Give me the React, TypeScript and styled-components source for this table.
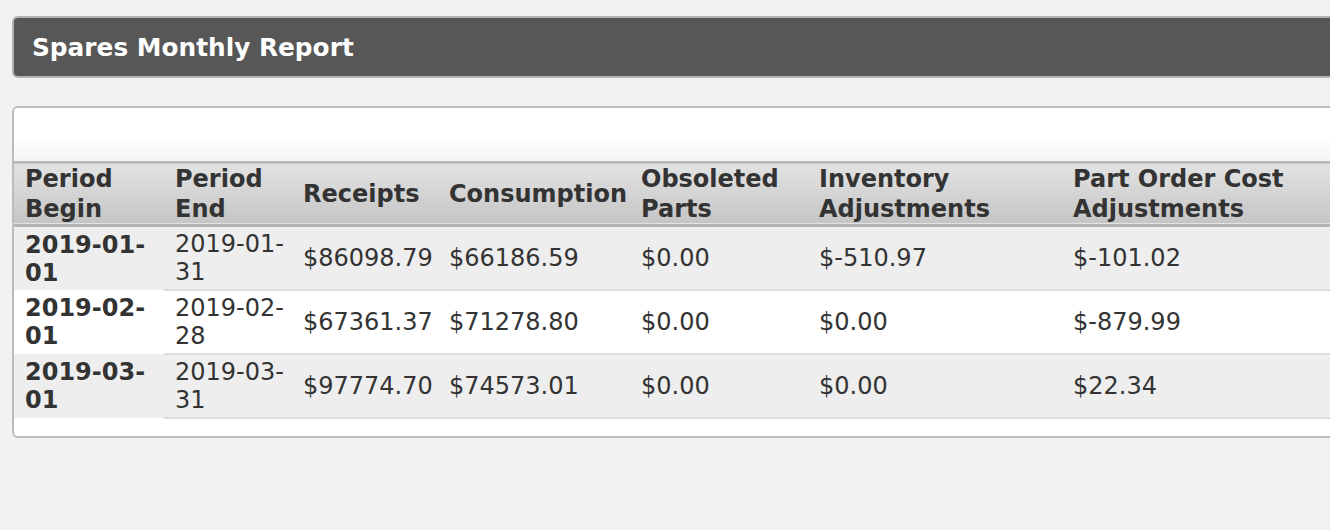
import React from "react";
import styled, { createGlobalStyle } from "styled-components";

const Global = createGlobalStyle`
  html, body {
    margin: 0;
    padding: 0;
    overflow: hidden;
    background: #f2f2f2;
  }
  body {
    font-family: "DejaVu Sans", Verdana, sans-serif;
    color: #333333;
  }
`;

const Page = styled.div`
  padding: 16px 0 0 12px;
  width: 1400px;
  display: flex;
  flex-direction: column;
  gap: 28px;
`;

const TitleBar = styled.div`
  height: 58px;
  display: flex;
  align-items: center;
  padding-left: 18px;
  background: #575757;
  border: 2px solid #b3b3b3;
  border-radius: 6px;
`;

const Title = styled.h1`
  margin: 0;
  font-size: 24.8px;
  font-weight: bold;
  color: #ffffff;
`;

const Card = styled.div`
  background: #ffffff;
  border: 2px solid #bcbcbc;
  border-radius: 6px;
  padding-bottom: 17px;
  overflow: hidden;
`;

const Toolbar = styled.div`
  height: 53px;
  background: linear-gradient(#ffffff 50%, #f5f5f5);
`;

const Table = styled.table`
  border-collapse: collapse;
  table-layout: fixed;
  width: 1348px;
  font-size: 24px;
`;

const HeadRow = styled.tr`
  background: linear-gradient(#e3e3e3, #c5c5c5);
  border-top: 2px solid #b8b8b8;
  border-bottom: 3px solid #b5b5b5;
`;

const HeadCell = styled.th<{ $w: number }>`
  box-sizing: border-box;
  width: ${(p) => p.$w}px;
  text-align: left;
  font-weight: bold;
  padding: 1px 6px 0 11px;
  line-height: 30px;
  vertical-align: middle;
  color: #333333;
`;

const BodyRow = styled.tr<{ $alt: boolean }>`
  background: ${(p) => (p.$alt ? "#eeeeee" : "#ffffff")};
`;

const RowHead = styled.th`
  text-align: left;
  font-weight: bold;
  padding: 3px 6px 3px 11px;
  line-height: 28px;
  vertical-align: middle;
  color: #333333;
`;

const Cell = styled.td`
  padding: 3px 6px 3px 11px;
  line-height: 28px;
  vertical-align: middle;
  border-bottom: 2px solid #dddddd;
`;

const columns = [
  { label: "Period Begin", w: 150 },
  { label: "Period End", w: 128 },
  { label: "Receipts", w: 146 },
  { label: "Consumption", w: 192 },
  { label: "Obsoleted Parts", w: 178 },
  { label: "Inventory Adjustments", w: 254 },
  { label: "Part Order Cost Adjustments", w: 300 },
];

const rows = [
  ["2019-01-01", "2019-01-31", "$86098.79", "$66186.59", "$0.00", "$-510.97", "$-101.02"],
  ["2019-02-01", "2019-02-28", "$67361.37", "$71278.80", "$0.00", "$0.00", "$-879.99"],
  ["2019-03-01", "2019-03-31", "$97774.70", "$74573.01", "$0.00", "$0.00", "$22.34"],
];

export default function App() {
  return (
    <>
      <Global />
      <Page>
        <TitleBar>
          <Title>Spares Monthly Report</Title>
        </TitleBar>
        <Card>
          <Toolbar />
          <Table>
            <thead>
              <HeadRow>
                {columns.map((c) => (
                  <HeadCell key={c.label} $w={c.w}>
                    {c.label}
                  </HeadCell>
                ))}
              </HeadRow>
            </thead>
            <tbody>
              {rows.map((r, i) => (
                <BodyRow key={r[0]} $alt={i % 2 === 0}>
                  <RowHead>{r[0]}</RowHead>
                  {r.slice(1).map((v, j) => (
                    <Cell key={j}>{v}</Cell>
                  ))}
                </BodyRow>
              ))}
            </tbody>
          </Table>
        </Card>
      </Page>
    </>
  );
}
